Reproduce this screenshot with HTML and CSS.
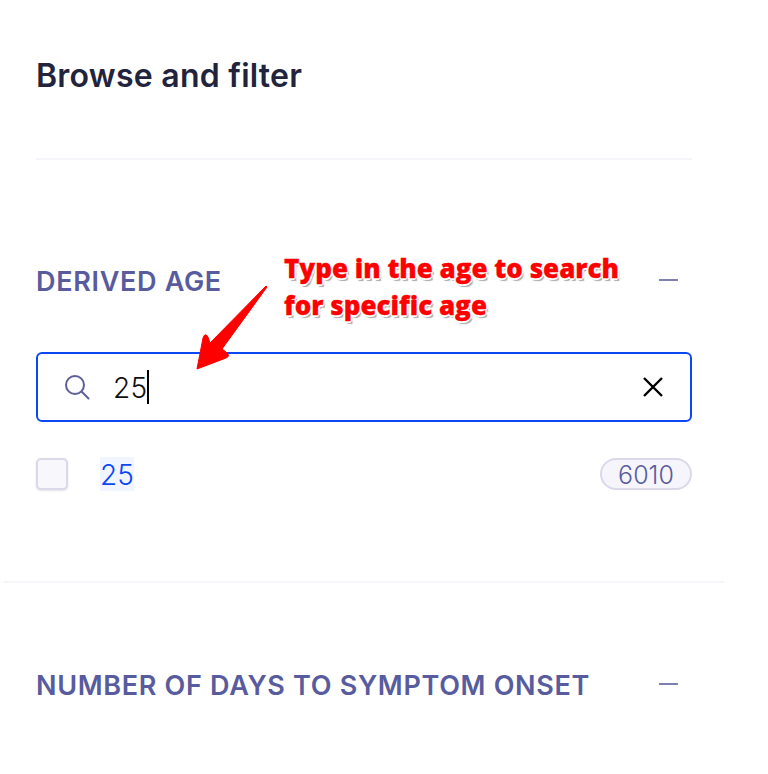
FILE: index.html
```html
<!DOCTYPE html>
<html lang="en">
<head>
<meta charset="utf-8">
<title>Browse and filter</title>
<link rel="stylesheet" href="styles.css">
</head>
<body>
<aside class="panel">
  <header class="head">
    <h1 class="title">Browse and filter</h1>
  </header>
  <section class="facet first">
    <div class="facet-head">
      <h2 class="facet-title">DERIVED AGE</h2>
      <span class="dash"></span>
    </div>
    <div class="search">
      <svg class="icon-search" viewBox="0 0 26 26" width="26" height="26" fill="none" stroke="#5c5f99" stroke-width="2" stroke-linecap="round"><circle cx="11" cy="11" r="9"/><path d="M18 18l6.500 6.500"/></svg>
      <span class="query">25</span><span class="caret"></span>
      <svg class="icon-x" viewBox="0 0 20 20" width="20" height="20" fill="none" stroke="#000" stroke-width="2.400"><path d="M1 1l18 18M19 1L1 19"/></svg>
    </div>
    <div class="option">
      <span class="check"></span>
      <span class="opt-label">25</span>
      <span class="count">6010</span>
    </div>
  </section>
  <section class="facet second">
    <div class="facet-head">
      <h2 class="facet-title">NUMBER OF DAYS TO SYMPTOM ONSET</h2>
      <span class="dash"></span>
    </div>
  </section>
</aside>
<div class="note">Type in the age to search<br>for specific age</div>
<svg class="arrow" viewBox="0 0 90 95" width="90" height="95"><path d="M77 7L32 69L36 72Q41 76 36 78L7 89L13 58Q15 52 18 57L20 63L76 6Z" fill="#f00" stroke="#f00" stroke-width="1" stroke-linejoin="round"/></svg>
</body>
</html>
```

FILE: styles.css
```css
* { box-sizing: border-box; }
html, body { margin: 0; background: #fff; }
body { width: 768px; height: 774px; overflow: hidden; position: relative; font-family: Inter, "Liberation Sans", sans-serif; }
.panel { width: 724px; padding-left: 4px; }
.head { margin: 0 32px; height: 160px; border-bottom: 2px solid #f5f5fa; padding-top: 56px; }
.title { margin: 0; font-size: 32px; line-height: 40px; font-weight: 600; color: #22243d; letter-spacing: .25px; }
.facet { padding: 0 32px; }
.first { height: 423px; border-bottom: 2px solid #f5f5fa; padding-top: 102px; }
.second { padding-top: 83px; }
.facet-head { display: flex; justify-content: space-between; align-items: center; height: 40px; }
.facet-title { margin: 0; font-size: 27px; line-height: 40px; font-weight: 600; color: #585c9e; letter-spacing: .68px; }
.dash { width: 19px; height: 2px; background: #7e80b0; margin: 0 14px 4px 0; }
.search { display: flex; align-items: center; height: 70px; margin-top: 50px; border: 2px solid #0a47f5; border-radius: 6px; padding: 0 27px 0 26px; }
.icon-search { flex: none; }
.query { margin: 2px 0 0 23px; font-size: 28px; font-weight: 300; color: #111; letter-spacing: .3px; }
.caret { width: 2px; height: 34px; background: #000; }
.icon-x { margin-left: auto; }
.option { display: flex; align-items: center; height: 34px; margin-top: 35px; }
.check { width: 32px; height: 32px; border: 2px solid #d9d9ea; border-radius: 5px; background: #f7f7fc; box-shadow: 0 1px 2px rgba(60,60,110,.15); }
.opt-label { margin-left: 32px; padding-top: 2px; background: #f1f5ff; color: #0a47f5; font-size: 28px; font-weight: 300; line-height: 32px; }
.count { margin-left: auto; width: 92px; height: 32px; text-align: center; border: 2px solid #d9d9ea; border-radius: 16px; background: #f5f5fb; color: #585c9e; font-size: 25px; font-weight: 300; line-height: 30px; }
.note { position: absolute; left: 284px; top: 250px; font-family: "Open Sans", sans-serif; font-weight: 800; font-size: 26px; line-height: 37px; color: #f00; -webkit-text-stroke: .3px #f00; text-shadow: 2px 0 0 #fff, -2px 0 0 #fff, 0 -2px 0 #fff, 0 2px 0 #fff, 1px 1px 0 #fff, -1px -1px 0 #fff, 1px -1px 0 #fff, -1px 1px 0 #fff, 2px 3px 1px #aaa; }
.arrow { position: absolute; left: 190px; top: 280px; }
```
